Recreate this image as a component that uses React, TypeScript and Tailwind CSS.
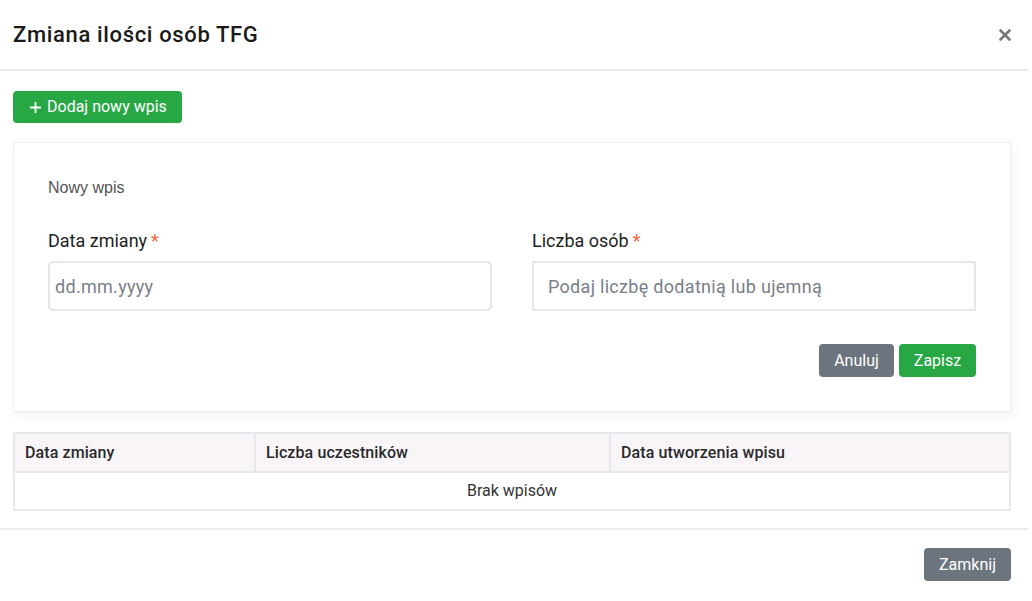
import { useState } from 'react';

type Entry = {
  date: string;
  count: string;
  createdAt: string;
};

function RequiredMark() {
  return <span className="ml-1 text-[#f0643c]">*</span>;
}

export default function App() {
  const [date, setDate] = useState('');
  const [count, setCount] = useState('');
  const [entries] = useState<Entry[]>([]);

  return (
    <div className="w-[1028px] bg-white font-['Roboto',sans-serif] text-[#212529]">
      {/* header */}
      <div className="flex h-[71px] items-center justify-between border-b-2 border-[#e9ebef] pl-[13px] pr-[13px]">
        <h1 className="text-[22px] font-medium tracking-[0.65px] text-[#1a1a1a]">Zmiana ilości osób TFG</h1>
        <button className="flex h-5 w-5 items-center justify-center text-[#777]">
          <svg width="12" height="12" viewBox="0 0 12 12">
            <path d="M1.5 1.5 L10.5 10.5 M10.5 1.5 L1.5 10.5" stroke="currentColor" strokeWidth="2.6" strokeLinecap="round" />
          </svg>
        </button>
      </div>

      {/* body */}
      <div className="flex flex-col gap-5 border-b-2 border-[#e9ebef] pb-[17px] pl-[13px] pr-[17px] pt-5">
        <div>
          <button className="flex h-8 items-center gap-[5px] rounded-[4px] bg-[#28a745] pl-4 pr-[15px] text-[16px] text-white">
            <svg width="13" height="13" viewBox="0 0 13 13">
              <path d="M6.5 1 V12 M1 6.5 H12" stroke="currentColor" strokeWidth="1.8" />
            </svg>
            Dodaj nowy wpis
          </button>
        </div>

        <div className="mt-[-1px] border border-[#eceef3] bg-white px-[34px] pb-[34px] pt-[35px] shadow-[3px_4px_10px_rgba(0,0,0,0.05)]">
          <p className="text-[16px] leading-5 text-[#555] font-['Liberation_Sans',sans-serif]">Nowy wpis</p>

          <div className="mt-[31px] grid grid-cols-2 gap-10">
            <div>
              <label className="block text-[18px] leading-6 text-[#1f1f1f]">
                Data zmiany
                <RequiredMark />
              </label>
              <input
                value={date}
                onChange={(e) => setDate(e.target.value)}
                placeholder="dd.mm.yyyy"
                className="mt-2 h-[50px] w-full rounded-[5px] border-2 border-[#e3e6ea] pl-[5px] text-[18px] tracking-[0.3px] text-[#333] outline-none placeholder:text-[#7a8088]"
              />
            </div>
            <div>
              <label className="block text-[18px] leading-6 text-[#1f1f1f]">
                Liczba osób
                <RequiredMark />
              </label>
              <input
                value={count}
                onChange={(e) => setCount(e.target.value)}
                placeholder="Podaj liczbę dodatnią lub ujemną"
                className="mt-2 h-[50px] w-full rounded-[2px] border-2 border-[#e3e6ea] px-[14px] text-[18px] tracking-[0.3px] text-[#333] outline-none placeholder:text-[#7a8088]"
              />
            </div>
          </div>

          <div className="mt-[33px] flex justify-end gap-[5px]">
            <button className="h-[33px] w-[75px] rounded-[4px] bg-[#6c757d] text-[16px] text-white">Anuluj</button>
            <button className="h-[33px] w-[77px] rounded-[4px] bg-[#28a745] text-[16px] text-white">Zapisz</button>
          </div>
        </div>

        <table className="w-[998px] table-fixed border-collapse border-2 border-[#e7e8ec] text-[16px]">
          <colgroup>
            <col className="w-[241px]" />
            <col className="w-[355px]" />
            <col />
          </colgroup>
          <thead>
            <tr className="h-[39px] bg-[#f8f4f8] text-left">
              <th className="border-2 border-[#e7e8ec] px-[10px] font-medium tracking-[0.1px] text-[#2a2a2a]">Data zmiany</th>
              <th className="border-2 border-[#e7e8ec] px-[10px] font-medium tracking-[0.1px] text-[#2a2a2a]">Liczba uczestników</th>
              <th className="border-2 border-[#e7e8ec] px-[10px] font-medium tracking-[0.1px] text-[#2a2a2a]">Data utworzenia wpisu</th>
            </tr>
          </thead>
          <tbody>
            {entries.length === 0 ? (
              <tr className="h-[38px]">
                <td colSpan={3} className="text-center text-[#333]">
                  Brak wpisów
                </td>
              </tr>
            ) : (
              entries.map((entry) => (
                <tr key={entry.createdAt} className="h-[38px]">
                  <td className="border-2 border-[#e7e8ec] px-[10px]">{entry.date}</td>
                  <td className="border-2 border-[#e7e8ec] px-[10px]">{entry.count}</td>
                  <td className="border-2 border-[#e7e8ec] px-[10px]">{entry.createdAt}</td>
                </tr>
              ))
            )}
          </tbody>
        </table>
      </div>

      {/* footer */}
      <div className="flex justify-end pb-5 pr-[17px] pt-[18px]">
        <button className="h-[33px] w-[87px] rounded-[4px] bg-[#6c757d] text-[16px] text-white">Zamknij</button>
      </div>
    </div>
  );
}
